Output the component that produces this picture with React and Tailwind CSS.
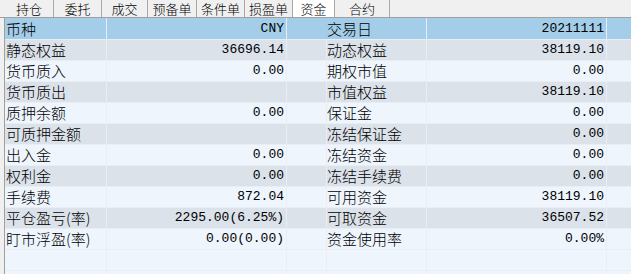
import React from "react";

const tabs = [
  { t: "持仓", w: 49 },
  { t: "委托", w: 48 },
  { t: "成交", w: 46 },
  { t: "预备单", w: 49 },
  { t: "条件单", w: 48 },
  { t: "损盈单", w: 48 },
  { t: "资金", w: 42, active: true },
  { t: "合约", w: 55 },
];

const rows = [
  ["静态权益", "36696.14", "动态权益", "38119.10"],
  ["货币质入", "0.00", "期权市值", "0.00"],
  ["货币质出", "", "市值权益", "38119.10"],
  ["质押余额", "0.00", "保证金", "0.00"],
  ["可质押金额", "", "冻结保证金", "0.00"],
  ["出入金", "0.00", "冻结资金", "0.00"],
  ["权利金", "0.00", "冻结手续费", "0.00"],
  ["手续费", "872.04", "可用资金", "38119.10"],
  ["平仓盈亏(率)", "2295.00(6.25%)", "可取资金", "36507.52"],
  ["盯市浮盈(率)", "0.00(0.00)", "资金使用率", "0.00%"],
  ["", "", "", ""],
  ["", "", "", ""],
];

const cjk = "font-['Noto_Sans_CJK_SC',sans-serif] font-light";
const mono = "font-['Liberation_Mono','Noto_Sans_CJK_SC',monospace]";

function Row({ r, bg, h, line }) {
  return (
    <div className={`flex ${h} ${bg} border-b ${line} text-black`}>
      <div className={`w-[102px] shrink-0 border-r ${line} pl-[1px] ${cjk} text-[15px] leading-[20px] whitespace-nowrap`}>{r[0]}</div>
      <div className={`w-[180px] shrink-0 border-r ${line} pr-[2px] text-right ${mono} text-[13px] leading-[20px] whitespace-nowrap`}>{r[1]}</div>
      <div className={`w-[40px] shrink-0 border-r ${line}`}></div>
      <div className={`w-[100px] shrink-0 border-r ${line} ${cjk} text-[15px] leading-[20px] whitespace-nowrap`}>{r[2]}</div>
      <div className={`w-[180px] shrink-0 border-r ${line} pr-[2px] text-right ${mono} text-[13px] leading-[20px] whitespace-nowrap`}>{r[3]}</div>
      <div className="flex-1"></div>
    </div>
  );
}

export default function App() {
  return (
    <div className="w-[631px] h-[274px] overflow-hidden bg-[#f0f0f0] flex flex-col">
      <div className="h-[18px] shrink-0 flex border-b border-[#a0a0a0] pl-[5px] bg-[#f0f0f0]">
        {tabs.map((tab) => (
          <div
            key={tab.t}
            style={{ width: tab.w }}
            className={`h-full flex items-center justify-center border-r border-[#a8a8a8] ${cjk} text-[13px] leading-[17px] text-black ${tab.active ? "bg-white" : ""}`}
          >
            {tab.t}
          </div>
        ))}
      </div>
      <div className="flex-1 ml-[4px] border-l border-[#a0a0a0] bg-[#eef5fd] flex flex-col">
        <div className="flex h-[22px] bg-[#a3cde8] border-b border-[#e8eef4] text-black">
          <div className={`w-[102px] shrink-0 border-r border-[#e8eef4] pl-[1px] ${cjk} text-[15px] leading-[21px]`}>币种</div>
          <div className={`w-[180px] shrink-0 border-r border-[#e8eef4] pr-[2px] text-right ${mono} text-[13px] leading-[21px]`}>CNY</div>
          <div className="w-[40px] shrink-0 border-r border-[#a3cde8]"></div>
          <div className={`w-[100px] shrink-0 border-r border-[#e8eef4] ${cjk} text-[15px] leading-[21px]`}>交易日</div>
          <div className={`w-[180px] shrink-0 border-r border-[#e8eef4] pr-[2px] text-right ${mono} text-[13px] leading-[21px]`}>20211111</div>
          <div className="flex-1"></div>
        </div>
        {rows.map((r, i) => (
          <Row
            key={i}
            r={r}
            h="h-[21px] shrink-0"
            bg={i % 2 === 0 && i < 10 ? "bg-[#dce2ea]" : "bg-[#eef5fd]"}
            line="border-[#e9eef4]"
          />
        ))}
      </div>
    </div>
  );
}
